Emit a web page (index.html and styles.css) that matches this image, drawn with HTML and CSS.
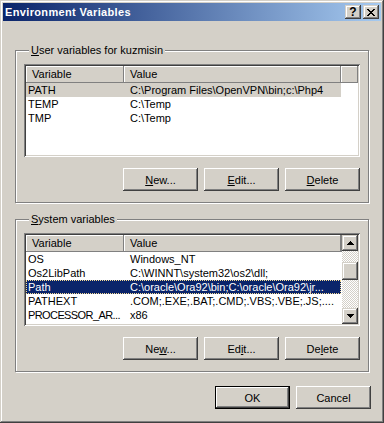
FILE: index.html
```html
<!DOCTYPE html>
<html lang="en">
<head>
  <meta charset="UTF-8" />
  <title>Environment Variables</title>
  <link rel="stylesheet" href="styles.css">
</head>
<body>
  <div class="window">
    <div class="titlebar">
      <span class="title">Environment Variables</span>
      <div class="caption-btns">
        <button class="cap-btn help-btn">?</button>
        <button class="cap-btn">
          <svg width="8" height="7" viewBox="0 0 8 7" shape-rendering="crispEdges">
            <path d="M0 0h2v1H0zM6 0h2v1H6zM1 1h2v1H1zM5 1h2v1H5zM2 2h4v1H2zM3 3h2v1H3zM2 4h4v1H2zM1 5h2v1H1zM5 5h2v1H5zM0 6h2v1H0zM6 6h2v1H6z" fill="#000"/>
          </svg>
        </button>
      </div>
    </div>

    <div class="content">
      <!-- User variables -->
      <fieldset class="group">
        <legend><u>U</u>ser variables for kuzmisin</legend>
        <div class="listview">
          <div class="lv-main">
            <div class="lv-header">
              <div class="lv-col col-var">Variable</div>
              <div class="lv-col col-val">Value</div>
              <div class="lv-col col-fill"></div>
            </div>
            <div class="lv-row sel-inactive">
              <span class="cell cell-var">PATH</span>
              <span class="cell cell-val">C:\Program Files\OpenVPN\bin;c:\Php4</span>
            </div>
            <div class="lv-row">
              <span class="cell cell-var">TEMP</span>
              <span class="cell cell-val">C:\Temp</span>
            </div>
            <div class="lv-row">
              <span class="cell cell-var">TMP</span>
              <span class="cell cell-val">C:\Temp</span>
            </div>
          </div>
        </div>
        <div class="btn-row">
          <button class="btn"><u>N</u>ew...</button>
          <button class="btn"><u>E</u>dit...</button>
          <button class="btn"><u>D</u>elete</button>
        </div>
      </fieldset>

      <!-- System variables -->
      <fieldset class="group group-sys">
        <legend><u>S</u>ystem variables</legend>
        <div class="listview">
          <div class="lv-main">
            <div class="lv-header">
              <div class="lv-col col-var">Variable</div>
              <div class="lv-col col-val">Value</div>
              <div class="lv-col col-fill"></div>
            </div>
            <div class="lv-row">
              <span class="cell cell-var">OS</span>
              <span class="cell cell-val">Windows_NT</span>
            </div>
            <div class="lv-row">
              <span class="cell cell-var">Os2LibPath</span>
              <span class="cell cell-val">C:\WINNT\system32\os2\dll;</span>
            </div>
            <div class="lv-row sel-active">
              <span class="cell cell-var">Path</span>
              <span class="cell cell-val">C:\oracle\Ora92\bin;C:\oracle\Ora92\jr...</span>
            </div>
            <div class="lv-row">
              <span class="cell cell-var">PATHEXT</span>
              <span class="cell cell-val">.COM;.EXE;.BAT;.CMD;.VBS;.VBE;.JS;....</span>
            </div>
            <div class="lv-row">
              <span class="cell cell-var cell-tight">PROCESSOR_AR...</span>
              <span class="cell cell-val">x86</span>
            </div>
          </div>
          <div class="scrollbar">
            <div class="sb-btn">
              <svg width="7" height="4" viewBox="0 0 7 4" shape-rendering="crispEdges"><path d="M3 0h1v1H3zM2 1h3v1H2zM1 2h5v1H1zM0 3h7v1H0z" fill="#000"/></svg>
            </div>
            <div class="sb-track">
              <div class="sb-thumb"></div>
            </div>
            <div class="sb-btn">
              <svg width="7" height="4" viewBox="0 0 7 4" shape-rendering="crispEdges"><path d="M0 0h7v1H0zM1 1h5v1H1zM2 2h3v1H2zM3 3h1v1H3z" fill="#000"/></svg>
            </div>
          </div>
        </div>
        <div class="btn-row">
          <button class="btn">Ne<u>w</u>...</button>
          <button class="btn">Ed<u>i</u>t...</button>
          <button class="btn">De<u>l</u>ete</button>
        </div>
      </fieldset>

      <div class="dlg-buttons">
        <button class="btn btn-default">OK</button>
        <button class="btn">Cancel</button>
      </div>
    </div>
  </div>
</body>
</html>
```

FILE: styles.css
```css
html, body {
  margin: 0;
  padding: 0;
  width: 384px;
  height: 423px;
  overflow: hidden;
  background: #d4d0c8;
}

body {
  font-family: Tahoma, 'Liberation Sans', Arial, sans-serif;
  font-size: 11px;
  color: #000;
}

.window {
  width: 384px;
  height: 423px;
  box-sizing: border-box;
  padding: 3px;
  background: #d4d0c8;
  box-shadow: inset -1px -1px #404040, inset 1px 1px #d4d0c8,
              inset -2px -2px #808080, inset 2px 2px #fff;
}

/* title bar */
.titlebar {
  height: 18px;
  display: flex;
  align-items: center;
  justify-content: space-between;
  background: linear-gradient(to right, #0a246a, #a6caf0);
}

.title {
  color: #fff;
  font-weight: bold;
  letter-spacing: 0.35px;
  padding-left: 2px;
  line-height: 18px;
}

.caption-btns {
  display: flex;
  gap: 2px;
  padding-right: 2px;
}

.cap-btn {
  width: 16px;
  height: 14px;
  padding: 0;
  border: none;
  background: #d4d0c8;
  display: flex;
  align-items: center;
  justify-content: center;
  box-shadow: inset -1px -1px #404040, inset 1px 1px #d4d0c8,
              inset -2px -2px #808080, inset 2px 2px #fff;
}

.help-btn {
  font-family: 'Liberation Sans', Arial, sans-serif;
  font-weight: bold;
  font-size: 12px;
  line-height: 12px;
  color: #000;
}

.cap-btn svg {
  display: block;
}

/* dialog body */
.content {
  padding: 23px 10px 0 12px;
}

.group {
  margin: 0;
  padding: 0 8px 11px 8px;
  width: 354px;
  box-sizing: border-box;
  border: 1px solid #808080;
  box-shadow: 1px 1px 0 #fff, inset 1px 1px 0 #fff;
  min-inline-size: 0;
}

.group-sys {
  margin-top: 10px;
}

.group legend {
  margin-left: 5px;
  padding: 0 2px;
  line-height: 13px;
  background: #d4d0c8;
}

/* list views */
.listview {
  margin-top: 7px;
  width: 336px;
  height: 93px;
  box-sizing: border-box;
  padding: 2px;
  background: #fff;
  display: flex;
  overflow: hidden;
  box-shadow: inset 1px 1px #808080, inset -1px -1px #fff,
              inset 2px 2px #404040, inset -2px -2px #d4d0c8;
}

.lv-main {
  flex: 1;
  min-width: 0;
  overflow: hidden;
}

.lv-header {
  display: flex;
  height: 17px;
}

.lv-col {
  box-sizing: border-box;
  height: 17px;
  line-height: 16px;
  padding-left: 6px;
  background: #d4d0c8;
  box-shadow: inset -1px -1px #808080, inset 1px 1px #fff;
  white-space: nowrap;
}

.col-var {
  width: 98px;
}

.col-val {
  width: 217px;
}

.col-fill {
  flex: 1;
  padding: 0;
}

.lv-row {
  display: flex;
  width: 315px;
  height: 14px;
  line-height: 14px;
  box-sizing: border-box;
  white-space: nowrap;
}

.cell {
  overflow: hidden;
}

.cell-var {
  width: 98px;
  padding-left: 2px;
  box-sizing: border-box;
}

.cell-tight {
  letter-spacing: -0.6px;
}

.cell-val {
  width: 217px;
  padding-left: 6px;
  box-sizing: border-box;
}

.sel-inactive {
  background: #d4d0c8;
}

.sel-active {
  background: #0a246a;
  color: #fff;
  outline: 1px dotted #f5db95;
  outline-offset: -1px;
}

/* scroll bar */
.scrollbar {
  width: 16px;
  display: flex;
  flex-direction: column;
}

.sb-btn,
.sb-thumb {
  background: #d4d0c8;
  box-shadow: inset -1px -1px #404040, inset 1px 1px #d4d0c8,
              inset -2px -2px #808080, inset 2px 2px #fff;
}

.sb-btn {
  height: 16px;
  display: flex;
  align-items: center;
  justify-content: center;
}

.sb-btn svg {
  display: block;
}

.sb-track {
  flex: 1;
  background: repeating-conic-gradient(#d4d0c8 0 25%, #fff 0 50%) 0 0 / 2px 2px;
}

.sb-thumb {
  margin-top: 11px;
  height: 18px;
}

/* buttons */
.btn-row {
  margin-top: 11px;
  display: flex;
  justify-content: flex-end;
  gap: 6px;
}

.btn {
  width: 75px;
  height: 23px;
  padding: 0;
  border: none;
  background: #d4d0c8;
  font-family: Tahoma, 'Liberation Sans', Arial, sans-serif;
  font-size: 11px;
  color: #000;
  box-shadow: inset -1px -1px #404040, inset 1px 1px #fff,
              inset -2px -2px #808080, inset 2px 2px #d4d0c8;
}

.btn-default {
  box-shadow: inset 0 0 0 1px #000, inset -2px -2px #404040,
              inset 2px 2px #fff, inset -3px -3px #808080;
}

.dlg-buttons {
  margin-top: 14px;
  display: flex;
  justify-content: flex-end;
  gap: 6px;
}
```
